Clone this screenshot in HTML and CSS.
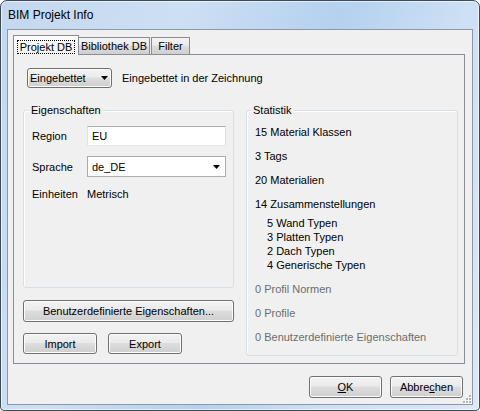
FILE: index.html
```html
<!DOCTYPE html>
<html>
<head>
<meta charset="utf-8">
<title>BIM Projekt Info</title>
<link rel="stylesheet" href="styles.css">
</head>
<body>
<div class="window">
  <div class="titlebar">BIM Projekt Info</div>
  <div class="client">
    <div class="tabs">
      <div class="tab active"><span class="focus">Projekt DB</span></div>
      <div class="tab t-bib">Bibliothek DB</div>
      <div class="tab t-filter">Filter</div>
    </div>
    <div class="panel">
      <div class="toprow">
        <div class="btn combo"><span>Eingebettet</span><svg class="arrow" width="7" height="4" viewBox="0 0 7 4"><polygon points="0,0 7,0 3.5,4" fill="#000"/></svg></div>
        <span class="desc">Eingebettet in der Zeichnung</span>
      </div>
      <div class="cols">
        <div class="leftcol">
          <div class="group props">
            <div class="legend">Eigenschaften</div>
            <div class="field f-region"><span class="lbl">Region</span><div class="input">EU</div></div>
            <div class="field f-lang"><span class="lbl">Sprache</span><div class="input select"><span>de_DE</span><svg class="arrow" width="7" height="4" viewBox="0 0 7 4"><polygon points="0,0 7,0 3.5,4" fill="#000"/></svg></div></div>
            <div class="field f-unit"><span class="lbl">Einheiten</span><span>Metrisch</span></div>
          </div>
          <button class="btn wide">Benutzerdefinierte Eigenschaften...</button>
          <div class="btnrow">
            <button class="btn small">Import</button>
            <button class="btn small">Export</button>
          </div>
        </div>
        <div class="group stats">
          <div class="legend">Statistik</div>
          <div class="item">15 Material Klassen</div>
          <div class="item">3 Tags</div>
          <div class="item">20 Materialien</div>
          <div class="item">14 Zusammenstellungen</div>
          <div class="sub">
            <div>5 Wand Typen</div>
            <div>3 Platten Typen</div>
            <div>2 Dach Typen</div>
            <div>4 Generische Typen</div>
          </div>
          <div class="item muted">0 Profil Normen</div>
          <div class="item muted">0 Profile</div>
          <div class="item muted">0 Benutzerdefinierte Eigenschaften</div>
        </div>
      </div>
    </div>
    <div class="footer">
      <button class="btn dlg"><u>O</u>K</button>
      <button class="btn dlg">Abbre<u>c</u>hen</button>
    </div>
    <svg class="grip" width="10" height="10" viewBox="0 0 10 10">
      <g fill="#fff"><rect x="8" y="2" width="2" height="2"/><rect x="8" y="5" width="2" height="2"/><rect x="5" y="5" width="2" height="2"/><rect x="8" y="8" width="2" height="2"/><rect x="5" y="8" width="2" height="2"/><rect x="2" y="8" width="2" height="2"/></g>
      <g fill="#b4b4b4"><rect x="7" y="1" width="2" height="2"/><rect x="7" y="4" width="2" height="2"/><rect x="4" y="4" width="2" height="2"/><rect x="7" y="7" width="2" height="2"/><rect x="4" y="7" width="2" height="2"/><rect x="1" y="7" width="2" height="2"/></g>
    </svg>
  </div>
</div>
</body>
</html>
```

FILE: styles.css
```css
html, body {
  margin: 0;
  padding: 0;
  background: #ffffff;
}

body {
  font-family: "Liberation Sans", Arial, sans-serif;
  font-size: 11px;
  color: #000;
}

.window {
  width: 480px;
  height: 411px;
  box-sizing: border-box;
  border: 1px solid #3f4a57;
  border-radius: 7px 7px 4px 4px;
  background: linear-gradient(110deg, #c3d8ef 0%, #cddff3 30%, #b4d1ef 55%, #cde0f4 75%, #dbe8f6 100%);
  box-shadow: inset 0 0 0 1px rgba(255, 255, 255, 0.6);
  padding: 0 6px 5px;
  display: flex;
  flex-direction: column;
}

.titlebar {
  height: 28px;
  line-height: 28px;
  padding-left: 1px;
  font-size: 12px;
  color: #000;
}

.client {
  flex: 1;
  position: relative;
  border: 1px solid #8c98a8;
  background: #f0f0f0;
  padding: 5px 7px 0 5px;
  display: flex;
  flex-direction: column;
}

.tabs {
  display: flex;
  align-items: flex-end;
  height: 19px;
  position: relative;
  z-index: 1;
}

.tab {
  box-sizing: border-box;
  height: 17px;
  border: 1px solid #898c95;
  border-bottom: none;
  padding-top: 1px;
  line-height: 15px;
  text-align: center;
  white-space: nowrap;
  background: linear-gradient(#f3f3f3 0%, #ebebeb 45%, #dddddd 50%, #cfcfcf 100%);
}

.tab.active {
  width: 66px;
  height: 20px;
  margin-bottom: -1px;
  padding-top: 4px;
  background: linear-gradient(#fcfcfc, #f2f2f2);
  display: flex;
  justify-content: center;
  align-items: flex-start;
}

.focus {
  display: block;
  flex: none;
  white-space: nowrap;
  border: 1px dotted #000;
  line-height: 12px;
  padding: 0 2px;
}

.t-bib {
  width: 71px;
  border-left: none;
}

.t-filter {
  width: 39px;
  margin-left: 1px;
}

.panel {
  box-sizing: border-box;
  height: 310px;
  border: 1px solid #898c95;
  background: #f0f0f0;
  padding: 13px 6px 8px 9px;
}

.toprow {
  display: flex;
  align-items: center;
  height: 20px;
}

.btn {
  box-sizing: border-box;
  border: 1px solid #707070;
  border-radius: 3px;
  background: linear-gradient(#f2f2f2 0%, #ebebeb 45%, #dddddd 50%, #cfcfcf 100%);
  box-shadow: inset 0 0 0 1px #fcfcfc;
  font: inherit;
  color: #000;
  padding: 0;
  margin: 0;
  text-align: center;
}

.combo {
  width: 85px;
  height: 20px;
  margin-left: 4px;
  display: flex;
  align-items: center;
  justify-content: space-between;
  padding: 0 3px 0 2px;
}

.arrow {
  display: block;
  flex: none;
}

.desc {
  margin-left: 10px;
}

.cols {
  margin-top: 22px;
  display: grid;
  grid-template-columns: 211px 212px;
  column-gap: 12px;
}

.leftcol {
  display: flex;
  flex-direction: column;
}

.group {
  box-sizing: border-box;
  border: 1px solid #d5dfe5;
  border-radius: 3px;
  box-shadow: inset 1px 1px 0 #fff;
}

.legend {
  width: fit-content;
  line-height: 14px;
  padding: 0 2px;
  background: #f0f0f0;
  margin-top: -8px;
}

.props {
  flex: 1;
  padding: 0 7px 0 8px;
}

.props .legend {
  margin-left: -3px;
}

.field {
  display: flex;
  align-items: center;
  height: 20px;
}

.lbl {
  width: 55px;
  flex: none;
}

.f-region { margin-top: 9px; }
.f-lang { margin-top: 10px; height: 21px; }
.f-unit { margin-top: 7px; }

.input {
  box-sizing: border-box;
  width: 139px;
  height: 20px;
  border: 1px solid #abadb3;
  border-color: #abadb3 #dbdfe6 #e3e9ef #e2e3ea;
  background: #fff;
  padding-left: 4px;
  line-height: 18px;
}

.select {
  height: 21px;
  display: flex;
  align-items: center;
  justify-content: space-between;
  padding-right: 5px;
  border-color: #abadb3;
}

.wide {
  height: 22px;
  margin-top: 12px;
  width: 211px;
}

.btnrow {
  display: flex;
  gap: 11px;
  margin-top: 11px;
  margin-bottom: 2px;
}

.small {
  width: 74px;
  height: 21px;
}

.stats {
  padding: 0 8px 11px 8px;
}

.stats .legend {
  margin-left: -4px;
}

.item {
  line-height: 14px;
  margin-top: 10px;
}

.stats .legend + .item {
  margin-top: 8px;
}

.sub {
  margin-top: 5px;
  padding-left: 12px;
  line-height: 14px;
}

.muted {
  color: #6d6d6d;
}

.footer {
  display: flex;
  justify-content: flex-end;
  gap: 8px;
  margin-top: 12px;
  padding-right: 2px;
}

.dlg {
  width: 73px;
  height: 22px;
}

.grip {
  position: absolute;
  right: 0;
  bottom: 0;
}
```
